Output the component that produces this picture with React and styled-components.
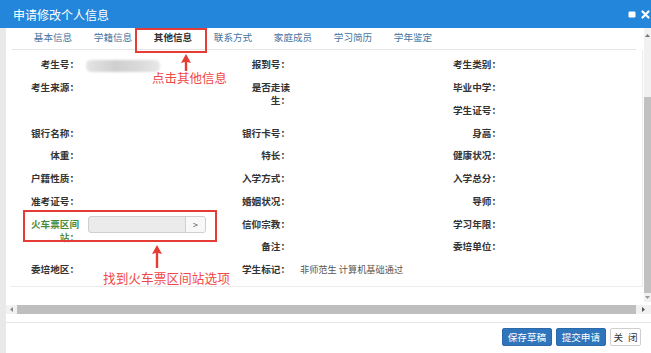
import React from "react";
import styled, { createGlobalStyle } from "styled-components";

const GlobalStyle = createGlobalStyle`
  html, body { margin: 0; padding: 0; background: #fff; overflow: hidden; }
  body { font-family: "Noto Sans CJK SC", "Noto Sans", sans-serif; }
  * { box-sizing: border-box; }
`;

const Window = styled.div`
  position: relative;
  width: 651px;
  height: 353px;
  display: flex;
  flex-direction: column;
  background: #fff;
`;

const TitleBar = styled.div`
  height: 28px;
  flex: none;
  background: #2386da;
  color: #fff;
  display: flex;
  align-items: center;
  justify-content: space-between;
  padding: 0 1px 0 13px;
  font-size: 12px;
`;

const TitleTools = styled.div`
  display: flex;
  align-items: center;
  gap: 5px;
`;

const Body = styled.div`
  flex: 1;
  display: flex;
  min-height: 0;
`;

const LeftEdge = styled.div`
  width: 6px;
  background: #e9e9e9;
`;

const Main = styled.div`
  flex: 1;
  display: flex;
  flex-direction: column;
`;

const Upper = styled.div`
  height: 274px;
  display: flex;
`;

const Content = styled.div`
  flex: 1;
`;

const Tabs = styled.div`
  height: 22px;
  margin: 0 8px 0 6px;
  padding-left: 11px;
  border-bottom: 1px solid #e6e6e6;
  display: flex;
`;

const Tab = styled.div`
  width: 60px;
  text-align: center;
  font-size: 9.6px;
  line-height: 19px;
  color: ${(p) => (p.$active ? "#333" : "#43739e")};
  font-weight: ${(p) => (p.$active ? 700 : 400)};
`;

const Panel = styled.div`
  margin-left: 4px;
  width: 633px;
  height: 237px;
  padding-top: 3.5px;
  border-right: 1px solid #ececec;
  border-bottom: 1px solid #ececec;
  display: grid;
  grid-template-columns: repeat(3, 211px);
  grid-auto-rows: 22.75px;
`;

const Field = styled.div`
  display: flex;
  align-items: flex-start;
  min-width: 0;
`;

const Label = styled.div`
  width: 54px;
  margin-left: 15px;
  flex: none;
  text-align: right;
  font-size: 9.6px;
  line-height: 13px;
  padding-top: 4.9px;
  font-weight: 700;
  color: ${(p) => (p.$green ? "#4a8b3a" : "#333")};
`;

const ValueText = styled.div`
  margin-left: 10px;
  font-size: 9.2px;
  line-height: 13px;
  padding-top: 5px;
  color: #555;
  white-space: nowrap;
`;

const Blurred = styled.div`
  margin: 6px 0 0 7px;
  width: 74px;
  height: 12px;
  border-radius: 5px;
  background: linear-gradient(90deg, #e4e4e4, #cfcfcf 40%, #d9d9d9 70%, #e8e8e8);
  filter: blur(1.2px);
`;

const PickInput = styled.div`
  margin: 3px 0 0 9px;
  width: 118px;
  height: 17px;
  border: 1px solid #cfcfcf;
  border-radius: 3px;
  background: #ebebeb;
  display: flex;
  justify-content: flex-end;
  overflow: hidden;
`;

const PickButton = styled.div`
  width: 20px;
  background: #f8f8f8;
  border-left: 1px solid #cfcfcf;
  font-size: 9px;
  line-height: 15px;
  text-align: center;
  color: #555;
`;

const VScroll = styled.div`
  width: 7px;
  background: #f1f1f1;
  display: flex;
  flex-direction: column;
  align-items: center;
`;

const ScrollArrow = styled.div`
  height: ${(p) => p.$h}px;
  display: flex;
  align-items: center;
  justify-content: center;
`;

const VThumb = styled.div`
  flex: 1;
  width: 100%;
  margin-top: 55px;
  background: #c1c1c1;
`;

const HScroll = styled.div`
  height: 9px;
  margin: 3px 0 0 0;
  display: flex;
  background: #f1f1f1;
`;

const HArrow = styled.div`
  width: ${(p) => p.$w}px;
  display: flex;
  align-items: center;
  justify-content: center;
`;

const HThumb = styled.div`
  flex: 1;
  background: #bebebe;
`;

const Footer = styled.div`
  flex: 1;
  margin-top: 8px;
  border-top: 1px solid #e6e6e6;
  display: flex;
  justify-content: flex-end;
  align-items: flex-start;
  gap: 4.5px;
  padding: 5px 10px 0 0;
`;

const Button = styled.div`
  height: 18px;
  padding: 0 ${(p) => (p.$primary ? 4.5 : 2.5)}px;
  border: 1px solid ${(p) => (p.$primary ? "#2b69a8" : "#cfcfcf")};
  border-radius: 2px;
  background: ${(p) => (p.$primary ? "#2f75bb" : "#fff")};
  color: ${(p) => (p.$primary ? "#fff" : "#333")};
  font-size: 9.6px;
  line-height: 16px;
  white-space: pre;
`;

const MarkBox = styled.div`
  position: absolute;
  left: ${(p) => p.$x}px;
  top: ${(p) => p.$y}px;
  width: ${(p) => p.$w}px;
  height: ${(p) => p.$h}px;
  border: 2px solid #e53c35;
  pointer-events: none;
`;

const MarkArrow = styled.svg`
  position: absolute;
  left: ${(p) => p.$x}px;
  top: ${(p) => p.$y}px;
`;

const Note = styled.div`
  position: absolute;
  left: ${(p) => p.$x}px;
  top: ${(p) => p.$y}px;
  font-size: ${(p) => p.$size}px;
  line-height: 16px;
  color: #f04848;
  white-space: nowrap;
`;

const tabs = ["基本信息", "学籍信息", "其他信息", "联系方式", "家庭成员", "学习简历", "学年鉴定"];

const fields = [
  { label: "考生号：", value: "blur" },
  { label: "报到号：" },
  { label: "考生类别：" },
  { label: "考生来源：" },
  { label: "是否走读生：" },
  { label: "毕业中学：" },
  null,
  null,
  { label: "学生证号：" },
  { label: "银行名称：" },
  { label: "银行卡号：" },
  { label: "身高：" },
  { label: "体重：" },
  { label: "特长：" },
  { label: "健康状况：" },
  { label: "户籍性质：" },
  { label: "入学方式：" },
  { label: "入学总分：" },
  { label: "准考证号：" },
  { label: "婚姻状况：" },
  { label: "导师：" },
  { label: "火车票区间站：", value: "pick", green: true },
  { label: "信仰宗教：" },
  { label: "学习年限：" },
  null,
  { label: "备注：" },
  { label: "委培单位：" },
  { label: "委培地区：" },
  { label: "学生标记：", value: "非师范生 计算机基础通过" },
  null,
];

const Arrow = ({ x, y, h }) => (
  <MarkArrow $x={x} $y={y} width="10" height={h} viewBox={`0 0 10 ${h}`}>
    <path d={`M5 0 L10 9 L6.2 8 L6.2 ${h} L3.8 ${h} L3.8 8 L0 9 Z`} fill="#e53c35" />
  </MarkArrow>
);

const renderValue = (f) => {
  if (f.value === "blur") return <Blurred />;
  if (f.value === "pick")
    return (
      <PickInput>
        <PickButton>&gt;</PickButton>
      </PickInput>
    );
  if (f.value) return <ValueText>{f.value}</ValueText>;
  return null;
};

const App = () => {
  return (
    <Window>
      <GlobalStyle />
      <TitleBar>
        <span>申请修改个人信息</span>
        <TitleTools>
          <svg width="8" height="7" viewBox="0 0 8 7">
            <rect x="0.5" y="0.5" width="7" height="6" rx="1.2" fill="#fff" />
          </svg>
          <svg width="9" height="9" viewBox="0 0 9 9">
            <path d="M1.5 1.5 L7.5 7.5 M7.5 1.5 L1.5 7.5" stroke="#fff" strokeWidth="2.2" strokeLinecap="round" />
          </svg>
        </TitleTools>
      </TitleBar>
      <Body>
        <LeftEdge />
        <Main>
          <Upper>
            <Content>
              <Tabs>
                {tabs.map((t) => (
                  <Tab key={t} $active={t === "其他信息"}>
                    {t}
                  </Tab>
                ))}
              </Tabs>
              <Panel>
                {fields.map((f, i) =>
                  f ? (
                    <Field key={i}>
                      <Label $green={f.green}>{f.label}</Label>
                      {renderValue(f)}
                    </Field>
                  ) : (
                    <div key={i} />
                  )
                )}
              </Panel>
            </Content>
            <VScroll>
              <ScrollArrow $h={14}>
                <svg width="5" height="3" viewBox="0 0 5 3">
                  <path d="M0 3 L2.5 0 L5 3 Z" fill="#777" />
                </svg>
              </ScrollArrow>
              <VThumb />
              <ScrollArrow $h={9}>
                <svg width="5" height="3" viewBox="0 0 5 3">
                  <path d="M0 0 L2.5 3 L5 0 Z" fill="#999" />
                </svg>
              </ScrollArrow>
            </VScroll>
          </Upper>
          <HScroll>
            <HArrow $w={11}>
              <svg width="3" height="5" viewBox="0 0 3 5">
                <path d="M3 0 L0 2.5 L3 5 Z" fill="#888" />
              </svg>
            </HArrow>
            <HThumb />
            <HArrow $w={15}>
              <svg width="3" height="5" viewBox="0 0 3 5">
                <path d="M0 0 L3 2.5 L0 5 Z" fill="#555" />
              </svg>
            </HArrow>
          </HScroll>
          <Footer>
            <Button $primary>保存草稿</Button>
            <Button $primary>提交申请</Button>
            <Button>{"关\u2002闭"}</Button>
          </Footer>
        </Main>
      </Body>

      <MarkBox $x={135} $y={28} $w={72} $h={25} />
      <Arrow x={181} y={54} h={17} />
      <Note $x={152} $y={70} $size={12.5}>点击其他信息</Note>

      <MarkBox $x={23} $y={210} $w={194} $h={32} />
      <Arrow x={152} y={245} h={23} />
      <Note $x={103} $y={270} $size={12.7}>找到火车票区间站选项</Note>
    </Window>
  );
};

export default App;
